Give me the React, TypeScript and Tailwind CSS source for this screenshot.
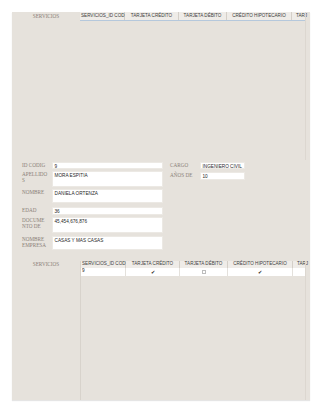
import React from 'react';

const sans = { fontFamily: '"Liberation Sans", Arial, sans-serif' };
const serif = { fontFamily: '"Liberation Serif", "Times New Roman", serif' };

const columns = [
  { title: 'SERVICIOS_ID COD', w: 'w-[45px]', align: 'justify-start pl-[1px]' },
  { title: 'TARJETA CRÉDITO', w: 'w-[54px]', align: 'justify-center' },
  { title: 'TARJETA DÉBITO', w: 'w-[48px]', align: 'justify-center' },
  { title: 'CRÉDITO HIPOTECARIO', w: 'w-[65px]', align: 'justify-center' },
  { title: 'TARJ', w: 'w-[13px]', align: 'justify-start pl-[4px]' },
];

function HeaderRow({ h, line }: { h: string; line?: boolean }) {
  return (
    <div className={`flex ${h} items-center bg-[#efece8] whitespace-nowrap ${line ? 'border-b border-[#b5c8dc]' : ''}`} style={sans}>
      {columns.map((c, i) => (
        <div
          key={c.title}
          className={`${c.w} shrink-0 h-full flex items-center ${c.align} ${i < 4 ? 'border-r border-[#d4cfc8]' : ''} text-[4.6px] text-[#3d3d3d]`}
        >
          {c.title}
        </div>
      ))}
    </div>
  );
}

function Check() {
  return <span className="text-[5px] leading-none text-[#222]">✔</span>;
}

function Box() {
  return <span className="inline-block w-[4px] h-[4px] border border-[#bdbdbd] bg-white" />;
}

function Field({ label, value, h, mt, iw }: { label: React.ReactNode; value: string; h: string; mt: string; iw: string }) {
  return (
    <div className={`flex items-start ${mt}`}>
      <div className="w-[30px] shrink-0 pt-[1px] text-[5.2px] leading-[5.6px] text-[#8a8178] uppercase whitespace-nowrap" style={serif}>
        {label}
      </div>
      <div className={`${iw} ${h} shrink-0 bg-white border border-[#ece9e4] px-[1.5px] pt-[1px] text-[4.7px] leading-[5px] text-[#1f1f1f] overflow-hidden whitespace-nowrap`} style={sans}>
        {value}
      </div>
    </div>
  );
}

export default function App() {
  return (
    <div className="w-[320px] h-[414px] bg-white pt-[12px] pl-[12px] pr-[10px]">
      <div className="h-[388px] bg-[#e6e2dc] flex flex-col overflow-hidden shadow-[0_1px_1px_rgba(0,0,0,0.1)]">
        {/* subform servicios superior */}
        <div className="h-[148px] flex shrink-0">
          <div className="w-[68px] shrink-0 h-[9px] flex items-center justify-center text-[5.2px] text-[#8a8178]" style={serif}>
            SERVICIOS
          </div>
          <div className="w-[225px] shrink-0">
            <HeaderRow h="h-[9px]" line />
          </div>
          <div className="flex-1 border-l border-[#dcd7d0]" />
        </div>

        {/* datos del cliente */}
        <div className="h-[101px] shrink-0 flex pl-[10px]">
          <div className="flex flex-col">
            <Field label="ID CODIG" value="9" h="h-[7px]" mt="mt-[2px]" iw="w-[111px]" />
            <Field label={<>APELLIDO<br />S</>} value="MORA ESPITIA" h="h-[16px]" mt="mt-[2px]" iw="w-[111px]" />
            <Field label="NOMBRE" value="DANIELA ORTENZA" h="h-[14px]" mt="mt-[2px]" iw="w-[111px]" />
            <Field label="EDAD" value="36" h="h-[8px]" mt="mt-[4px]" iw="w-[111px]" />
            <Field label={<>DOCUME<br />NTO DE</>} value="45,454,676,876" h="h-[16px]" mt="mt-[2px]" iw="w-[111px]" />
            <Field label={<>NOMBRE<br />EMPRESA</>} value="CASAS Y MAS CASAS" h="h-[14px]" mt="mt-[3px]" iw="w-[111px]" />
          </div>
          <div className="flex flex-col ml-[7px]">
            <Field label="CARGO" value="INGENIERO CIVIL" h="h-[7px]" mt="mt-[2px]" iw="w-[45px]" />
            <Field label="AÑOS DE" value="10" h="h-[8px]" mt="mt-[3px]" iw="w-[45px]" />
          </div>
        </div>

        {/* subform servicios inferior */}
        <div className="flex-1 flex">
          <div className="w-[68px] shrink-0 h-[7px] flex items-center justify-center text-[5.2px] text-[#8a8178]" style={serif}>
            SERVICIOS
          </div>
          <div className="w-[225px] shrink-0 border-l border-[#d8d3cc]">
            <HeaderRow h="h-[7px]" />
            <div className="flex h-[8px] bg-white whitespace-nowrap" style={sans}>
              <div className="w-[45px] shrink-0 h-full pl-[1px] border-r border-[#e4e1dc] text-[4.7px] leading-[6px] text-[#1f1f1f]">9</div>
              <div className="w-[54px] shrink-0 h-full flex items-center justify-center border-r border-[#e4e1dc]"><Check /></div>
              <div className="w-[48px] shrink-0 h-full flex items-center justify-center border-r border-[#e4e1dc]"><Box /></div>
              <div className="w-[65px] shrink-0 h-full flex items-center justify-center border-r border-[#e4e1dc]"><Check /></div>
              <div className="w-[13px] shrink-0 h-full" />
            </div>
          </div>
          <div className="flex-1 border-l border-[#dcd7d0]" />
        </div>
      </div>
    </div>
  );
}
